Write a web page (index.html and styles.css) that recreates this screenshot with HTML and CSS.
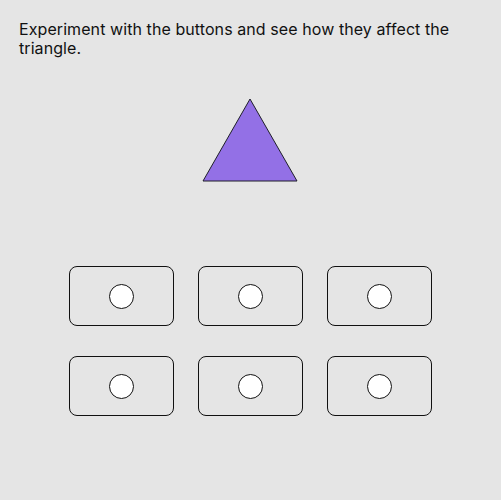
FILE: index.html
```html
<!DOCTYPE html>
<html lang="en">
<head>
    <meta charset="UTF-8">
    <meta name="viewport" content="width=device-width, initial-scale=1.0">
    <title>Triangle Experiment</title>
    <link rel="stylesheet" href="styles.css">
</head>
<body>
    <div class="page">
        <p class="intro">Experiment with the buttons and see how they affect the triangle.</p>

        <!-- Треугольник -->
        <div class="stage">
            <svg class="triangle" width="96" height="84" viewBox="0 0 96 84">
                <polygon points="48,1 1,83 95,83" fill="#9370e6" stroke="#1f1f2a" stroke-width="1" stroke-linejoin="miter"/>
            </svg>
        </div>

        <!-- Кнопки -->
        <div class="buttons">
            <button class="btn"><span class="dot"></span></button>
            <button class="btn"><span class="dot"></span></button>
            <button class="btn"><span class="dot"></span></button>
            <button class="btn"><span class="dot"></span></button>
            <button class="btn"><span class="dot"></span></button>
            <button class="btn"><span class="dot"></span></button>
        </div>
    </div>
</body>
</html>
```

FILE: styles.css
```css
html, body {
    margin: 0;
    height: 100%;
    background-color: #e5e5e5;
}
body {
    font-family: Inter, "Noto Sans", sans-serif;
    color: #111;
}
.page {
    padding: 20px 19px;
}
.intro {
    margin: 0;
    font-size: 16px;
    line-height: 19px;
    letter-spacing: 0.08px;
    max-width: 440px;
}
.stage {
    display: flex;
    justify-content: center;
    margin-top: 40px;
    margin-left: -2px;
}
.triangle {
    display: block;
}
.buttons {
    display: grid;
    grid-template-columns: repeat(3, 105px);
    column-gap: 24px;
    row-gap: 30px;
    justify-content: center;
    margin-top: 84px;
    margin-left: -1px;
}
.btn {
    box-sizing: border-box;
    width: 105px;
    height: 60px;
    padding: 0;
    background: transparent;
    border: 1px solid #111;
    border-radius: 8px;
    display: flex;
    align-items: center;
    justify-content: center;
    cursor: pointer;
}
.dot {
    box-sizing: border-box;
    width: 25px;
    height: 25px;
    border-radius: 50%;
    background-color: #fff;
    border: 1px solid #111;
}
```
